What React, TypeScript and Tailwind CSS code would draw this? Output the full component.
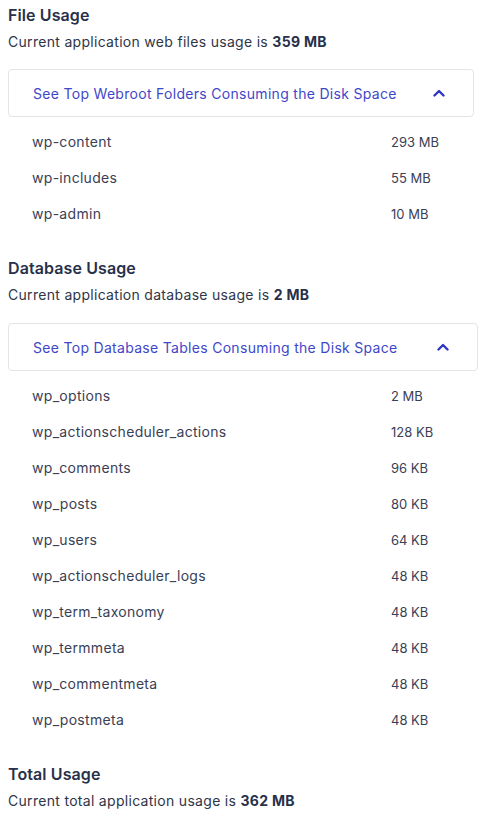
import React from "react";

const FOLDERS = [
  { name: "wp-content", size: "293 MB" },
  { name: "wp-includes", size: "55 MB" },
  { name: "wp-admin", size: "10 MB" },
];

const TABLES = [
  { name: "wp_options", size: "2 MB" },
  { name: "wp_actionscheduler_actions", size: "128 KB" },
  { name: "wp_comments", size: "96 KB" },
  { name: "wp_posts", size: "80 KB" },
  { name: "wp_users", size: "64 KB" },
  { name: "wp_actionscheduler_logs", size: "48 KB" },
  { name: "wp_term_taxonomy", size: "48 KB" },
  { name: "wp_termmeta", size: "48 KB" },
  { name: "wp_commentmeta", size: "48 KB" },
  { name: "wp_postmeta", size: "48 KB" },
];

function ChevronUp() {
  return (
    <svg width="12" height="8" viewBox="0 0 12 8" fill="none">
      <path
        d="M1.5 6.5 L6 2 L10.5 6.5"
        stroke="#2f37c2"
        strokeWidth="2.4"
        strokeLinecap="round"
        strokeLinejoin="round"
      />
    </svg>
  );
}

function Section({
  title,
  text,
  value,
}: {
  title: string;
  text: string;
  value: string;
}) {
  return (
    <div>
      <h2 className="text-[16px] font-semibold leading-[20px] tracking-[0.1px] text-[#28304a]">
        {title}
      </h2>
      <p className="mt-[8px] text-[14px] leading-[18px] tracking-[0.3px] text-[#2f3547]">
        {text} <span className="font-bold text-[#28304a]">{value}</span>
      </p>
    </div>
  );
}

function Toggle({ label, wide }: { label: string; wide?: boolean }) {
  return (
    <div
      className={`flex h-[48px] items-center justify-between rounded-[4px] border border-[#e2e4e9] bg-white pl-[24px] pr-[28px] ${
        wide ? "mt-[19px] w-[470px]" : "mt-[18px] w-[466px]"
      }`}
    >
      <span className="text-[14px] tracking-[0.3px] text-[#3f47c9]">
        {label}
      </span>
      <ChevronUp />
    </div>
  );
}

function Rows({ items }: { items: { name: string; size: string }[] }) {
  return (
    <ul className="pt-[7px]">
      {items.map((item) => (
        <li key={item.name} className="flex h-[36px] items-center">
          <div className="flex items-baseline leading-[20px] text-[#3a4055]">
            <span className="w-[383px] pl-[24px] text-[14px] tracking-[0.3px]">
              {item.name}
            </span>
            <span className="text-[13px]">{item.size}</span>
          </div>
        </li>
      ))}
    </ul>
  );
}

export default function App() {
  return (
    <div
      className="min-h-[816px] bg-white pl-[8px] pt-[5px]"
      style={{ fontFamily: "Inter, 'Noto Sans', sans-serif" }}
    >
      <Section
        title="File Usage"
        text="Current application web files usage is"
        value="359 MB"
      />
      <Toggle label="See Top Webroot Folders Consuming the Disk Space" />
      <Rows items={FOLDERS} />

      <div className="mt-[26px]">
        <Section
          title="Database Usage"
          text="Current application database usage is"
          value="2 MB"
        />
      </div>
      <Toggle label="See Top Database Tables Consuming the Disk Space" wide />
      <Rows items={TABLES} />

      <div className="mt-[26px]">
        <Section
          title="Total Usage"
          text="Current total application usage is"
          value="362 MB"
        />
      </div>
    </div>
  );
}
